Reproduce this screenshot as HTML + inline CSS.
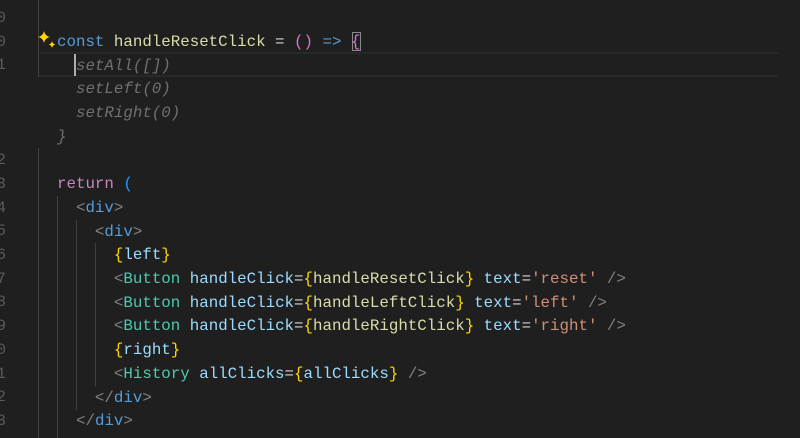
<!DOCTYPE html>
<html><head><meta charset="utf-8"><style>
html,body{margin:0;padding:0;background:#1f1f1f;width:800px;height:438px;overflow:hidden;position:relative}
.code{position:absolute;left:57px;top:31px;font-family:"Liberation Mono",monospace;font-size:15.8px;line-height:23.7px;white-space:pre;color:#d4d4d4}
.k{color:#569cd6}.f{color:#dcdcaa}.p{color:#da70d6}.g{color:#707070;font-style:italic}
.r{color:#c586c0}.b{color:#179fff}.t{color:#808080}.y{color:#ffd700}.v{color:#9cdcfe}.c{color:#4ec9b0}.s{color:#ce9178}
.gd{position:absolute;width:1px;background:#404040}
.ln{position:absolute;left:-6px;top:7px;font-family:"Liberation Mono",monospace;font-size:15.8px;line-height:23.7px;color:#5a5a5a;text-align:right;width:12px;white-space:pre}
</style></head><body>
<div style="position:absolute;left:38px;top:52px;width:740px;height:2px;background:#282828"></div>
<div style="position:absolute;left:38px;top:75px;width:740px;height:2px;background:#282828"></div>
<div class="gd" style="left:38px;top:0;height:77px"></div>
<div class="gd" style="left:38px;top:148px;height:290px"></div>
<div class="gd" style="left:57px;top:196px;height:242px"></div>
<div class="gd" style="left:76px;top:220px;height:190px"></div>
<div class="gd" style="left:95px;top:243px;height:143px"></div>
<div style="position:absolute;left:74px;top:54px;width:2px;height:22px;background:#aeafad"></div>
<div style="position:absolute;left:352px;top:32px;width:9px;height:19px;border:1px solid #888;box-sizing:border-box"></div>
<svg style="position:absolute;left:37px;top:30px" width="22" height="22" viewBox="0 0 22 22">
<path d="M7 1 Q8 6 13 7 Q8 8 7 13 Q6 8 1 7 Q6 6 7 1Z" fill="#ffd700"/>
<path d="M15 11 Q15.6 14 18.5 14.5 Q15.6 15 15 18 Q14.4 15 11.5 14.5 Q14.4 14 15 11Z" fill="#ffd700"/>
</svg>
<div class="ln">0
0
1



2
3
4
5
6
7
8
9
0
1
2
3</div>
<div class="code"><span class="k">const</span> <span class="f">handleResetClick</span> = <span class="p">()</span> <span class="k">=&gt;</span> <span class="p">{</span>
<span class="g">  setAll([])</span>
<span class="g">  setLeft(0)</span>
<span class="g">  setRight(0)</span>
<span class="g">}</span>

<span class="r">return</span> <span class="b">(</span>
  <span class="t">&lt;</span><span class="k">div</span><span class="t">&gt;</span>
    <span class="t">&lt;</span><span class="k">div</span><span class="t">&gt;</span>
      <span class="y">{</span><span class="v">left</span><span class="y">}</span>
      <span class="t">&lt;</span><span class="c">Button</span> <span class="v">handleClick</span>=<span class="y">{</span><span class="f">handleResetClick</span><span class="y">}</span> <span class="v">text</span>=<span class="s">'reset'</span> <span class="t">/&gt;</span>
      <span class="t">&lt;</span><span class="c">Button</span> <span class="v">handleClick</span>=<span class="y">{</span><span class="f">handleLeftClick</span><span class="y">}</span> <span class="v">text</span>=<span class="s">'left'</span> <span class="t">/&gt;</span>
      <span class="t">&lt;</span><span class="c">Button</span> <span class="v">handleClick</span>=<span class="y">{</span><span class="f">handleRightClick</span><span class="y">}</span> <span class="v">text</span>=<span class="s">'right'</span> <span class="t">/&gt;</span>
      <span class="y">{</span><span class="v">right</span><span class="y">}</span>
      <span class="t">&lt;</span><span class="c">History</span> <span class="v">allClicks</span>=<span class="y">{</span><span class="v">allClicks</span><span class="y">}</span> <span class="t">/&gt;</span>
    <span class="t">&lt;/</span><span class="k">div</span><span class="t">&gt;</span>
  <span class="t">&lt;/</span><span class="k">div</span><span class="t">&gt;</span></div>
</body></html>
